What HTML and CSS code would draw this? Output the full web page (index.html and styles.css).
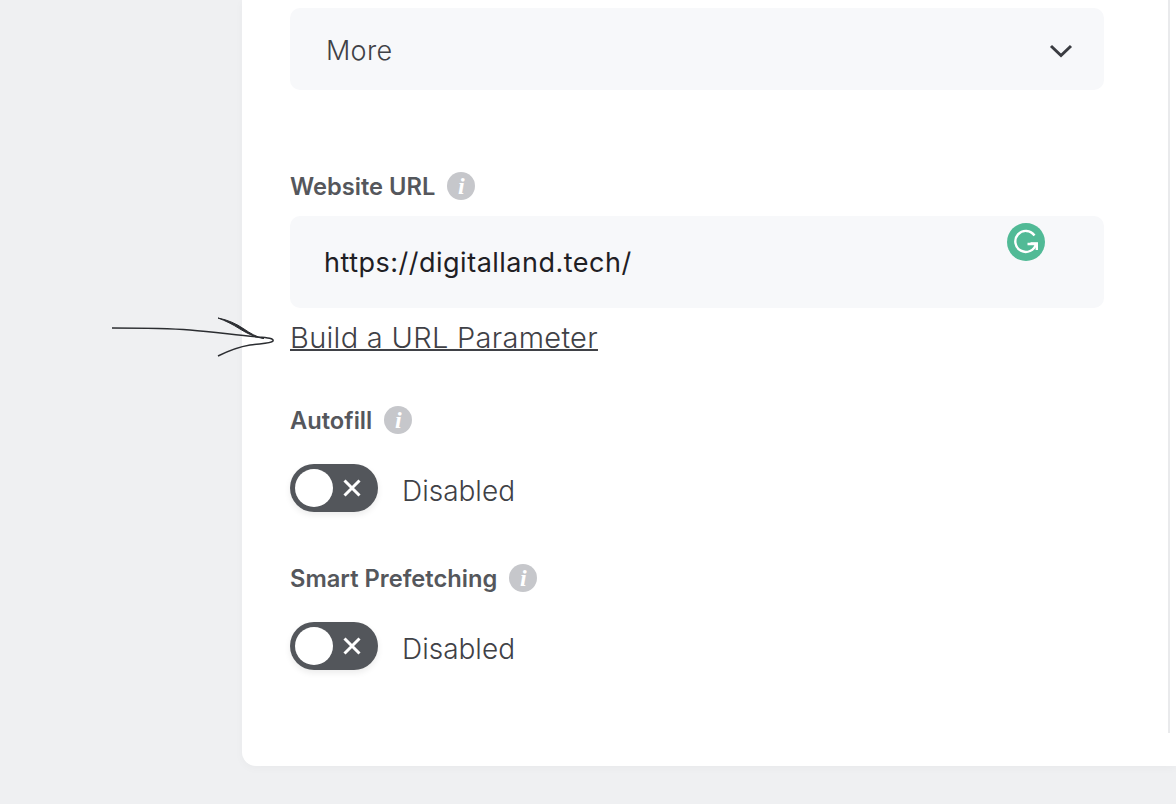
FILE: index.html
```html
<!DOCTYPE html>
<html lang="en">
<head>
  <meta charset="UTF-8">
  <title>Settings</title>
  <link rel="stylesheet" href="styles.css">
</head>
<body>

  <!-- Hand drawn arrow pointing at the link -->
  <svg class="arrow" width="180" height="50" viewBox="0 0 180 50" fill="none">
    <path d="M2 18C28 18 55 18 80 20C105 22 125 25 148 27C158 27.600 164 28.500 163 31C161 33.500 150 33.500 140 35C128 37 118 41 108 46" stroke="#2b2d31" stroke-width="1.500"/>
    <path d="M108 8C118 10 126 13.500 134 19C140 23 146 27 154 28.500C146 27.500 138 24 130 19C122 14 116 11 108 8Z" fill="#2b2d31" stroke="#2b2d31" stroke-width="1"/>
  </svg>

  <main class="card">
    <div class="card-inner">

      <!-- More dropdown -->
      <div class="more-select">
        <span class="more-text">More</span>
        <svg class="chevron" width="24" height="14" viewBox="0 0 24 14" fill="none">
          <path d="M2 2L12 11.500L22 2" stroke="#3a3c41" stroke-width="3"/>
        </svg>
      </div>

      <!-- Website URL -->
      <div class="field-label url-label">
        <span>Website URL</span>
        <span class="info">i</span>
      </div>
      <div class="url-input">
        <span>https://digitalland.tech/</span>
        <svg class="grammarly" width="38" height="38" viewBox="0 0 38 38" fill="none">
          <circle cx="19" cy="19" r="19" fill="#51ba96"/>
          <path d="M27.500 12.500A10.500 10.500 0 1 0 29 21H20.500" stroke="#fff" stroke-width="2.400"/>
          <path d="M29.800 27V20.500H23.500" stroke="#fff" stroke-width="2.400"/>
        </svg>
      </div>
      <a class="param-link" href="#">Build a URL Parameter</a>

      <!-- Autofill -->
      <div class="field-label autofill-label">
        <span>Autofill</span>
        <span class="info">i</span>
      </div>
      <div class="toggle-row">
        <div class="toggle">
          <span class="knob"></span>
          <svg width="20" height="20" viewBox="0 0 20 20" fill="none">
            <path d="M2.500 2.500L17.500 17.500M17.500 2.500L2.500 17.500" stroke="#fff" stroke-width="3"/>
          </svg>
        </div>
        <span class="toggle-text">Disabled</span>
      </div>

      <!-- Smart Prefetching -->
      <div class="field-label prefetch-label">
        <span>Smart Prefetching</span>
        <span class="info">i</span>
      </div>
      <div class="toggle-row">
        <div class="toggle">
          <span class="knob"></span>
          <svg width="20" height="20" viewBox="0 0 20 20" fill="none">
            <path d="M2.500 2.500L17.500 17.500M17.500 2.500L2.500 17.500" stroke="#fff" stroke-width="3"/>
          </svg>
        </div>
        <span class="toggle-text">Disabled</span>
      </div>

    </div>
  </main>

</body>
</html>
```

FILE: styles.css
```css
/* Global styles */
html, body {
  height: 804px;
}

body {
  font-family: 'Inter', sans-serif;
  font-weight: 300;
  margin: 0;
  padding: 0 0 38px 242px;
  box-sizing: border-box;
  background-color: #eff0f2;
  color: #3f4146;
  overflow: hidden;
  position: relative;
}

/* Card */
.card {
  height: 100%;
  background-color: white;
  border-radius: 0 0 0 14px;
  box-shadow: 0 2px 10px rgba(0, 0, 0, 0.03);
  padding: 0 6px 33px 0;
  box-sizing: border-box;
}

.card-inner {
  height: 100%;
  box-sizing: border-box;
  padding: 8px 64px 0 48px;
  border-right: 2px solid #e9eaec;
}

/* More dropdown */
.more-select {
  height: 82px;
  box-sizing: border-box;
  padding: 0 31px 0 36px;
  display: flex;
  justify-content: space-between;
  align-items: center;
  background-color: #f7f8fa;
  border-radius: 10px;
  font-size: 27px;
  letter-spacing: 0.3px;
}

.more-text {
  padding-top: 2px;
}

.chevron {
  margin-top: 3px;
}

/* Labels */
.field-label {
  display: flex;
  align-items: center;
  gap: 12px;
  height: 28px;
  font-size: 23.700px;
  font-weight: 600;
  color: #55575c;
}

.url-label {
  margin-top: 82px;
}

.autofill-label {
  margin-top: 50px;
}

.prefetch-label {
  margin-top: 52px;
}

.info {
  width: 28px;
  height: 28px;
  border-radius: 50%;
  background-color: #c6c7cb;
  color: white;
  display: flex;
  justify-content: center;
  align-items: center;
  font-family: 'Liberation Serif', serif;
  font-style: italic;
  font-weight: 700;
  font-size: 24px;
}

/* URL input */
.url-input {
  position: relative;
  height: 92px;
  margin-top: 16px;
  box-sizing: border-box;
  padding: 0 34px;
  display: flex;
  align-items: center;
  background-color: #f7f8fa;
  border-radius: 10px;
  font-size: 27px;
  font-weight: 400;
  letter-spacing: 0.5px;
  color: #1f2024;
}

.grammarly {
  position: absolute;
  left: 717px;
  top: 7px;
}

.param-link {
  display: block;
  margin-top: 12px;
  font-size: 29px;
  line-height: 36px;
  letter-spacing: 0.300px;
  text-decoration-thickness: 2px;
  color: #3f4146;
}

/* Toggles */
.toggle-row {
  display: flex;
  align-items: center;
  gap: 24px;
  margin-top: 30px;
  font-size: 28px;
}

.toggle-text {
  padding-top: 5px;
}

.toggle {
  width: 88px;
  height: 48px;
  box-sizing: border-box;
  padding: 0 16px 0 5px;
  display: flex;
  justify-content: space-between;
  align-items: center;
  background-color: #53565b;
  border-radius: 24px;
  box-shadow: 0 3px 6px rgba(0, 0, 0, 0.08);
}

.knob {
  width: 38px;
  height: 38px;
  border-radius: 50%;
  background-color: white;
}

/* Hand drawn note over the page */
.arrow {
  position: absolute;
  left: 110px;
  top: 310px;
}
```
